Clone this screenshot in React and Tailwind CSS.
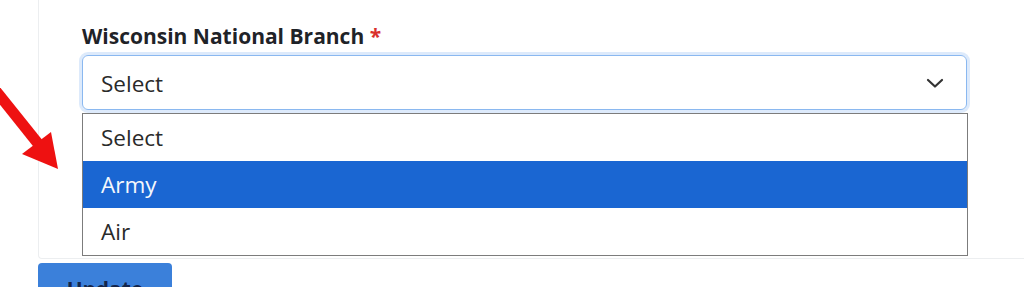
import React from "react";

export default function App() {
  return (
    <div
      className="relative w-[1024px] h-[287px] overflow-hidden bg-white"
      style={{ fontFamily: '"Open Sans", "Noto Sans", "Liberation Sans", sans-serif' }}
    >
      <div className="ml-[38px] h-[259px] border-l border-b border-[#eceef0] rounded-bl-[4px] pt-[23px] pl-[43px] pr-[57px]">
        <div className="text-[21px] font-bold text-[#1f2328] leading-[26px] whitespace-nowrap">
          Wisconsin National Branch <span className="text-[#d9302c]">*</span>
        </div>
        <div className="mt-[6px] h-[55px] w-[885px] flex items-center justify-between rounded-[6px] border border-[#8ab8f0] shadow-[0_0_0_3px_rgba(120,170,240,0.25)] pl-[18px] pr-[22px]">
          <span className="text-[22.5px] text-[#2a2a2a] pt-[3px]">Select</span>
          <svg width="18" height="12" viewBox="0 0 18 12" fill="none">
            <path d="M2 3l7 6.5L16 3" stroke="#333" strokeWidth="2.2" strokeLinecap="round" strokeLinejoin="round" />
          </svg>
        </div>
        <div className="mt-[3px] w-[886px] border border-[#7c7c7c] text-[22.5px] text-[#2a2a2a]">
          <div className="h-[47px] flex items-center pl-[18px]">Select</div>
          <div className="h-[47px] flex items-center pl-[18px] bg-[#1a66d2] text-[#f4f7fc]">Army</div>
          <div className="h-[47px] flex items-center pl-[18px]">Air</div>
        </div>
      </div>
      <div className="mt-[4px] ml-[38px] w-[134px] h-[40px] bg-[#3b80da] rounded-t-[4px] flex justify-center pt-[12px]">
        <span className="text-[21px] font-bold text-[#14254a] leading-[28px]">Update</span>
      </div>
      <svg className="absolute left-0 top-0" width="80" height="190" viewBox="0 0 80 190">
        <path d="M-8 86 L40 146" stroke="#ee1111" strokeWidth="11" />
        <polygon points="22,154 51,132 58,169" fill="#ee1111" />
      </svg>
    </div>
  );
}
